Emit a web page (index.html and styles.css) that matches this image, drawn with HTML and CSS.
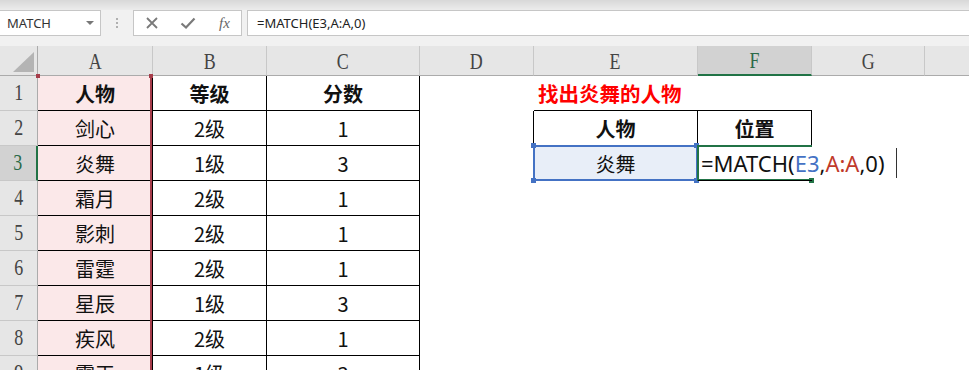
FILE: index.html
```html
<!DOCTYPE html>
<html lang="zh">
<head>
<meta charset="utf-8">
<link rel="stylesheet" href="styles.css">
</head>
<body>
<div class="app">
  <div class="topstrip"></div>
  <div class="fbar">
    <div class="namebox"><span>MATCH</span><span class="caret"></span></div>
    <div class="grip"><i></i><i></i><i></i></div>
    <div class="btns">
      <svg class="ic" width="14" height="14" viewBox="0 0 14 14"><path d="M2 2L12 12M12 2L2 12" stroke="#7a7a7a" stroke-width="1.8" fill="none"/></svg>
      <svg class="ic" width="16" height="14" viewBox="0 0 16 14"><path d="M1.5 7.5L6 11.5L14.5 2.5" stroke="#7a7a7a" stroke-width="2.2" fill="none"/></svg>
      <span class="fx">fx</span>
    </div>
    <div class="formula">=MATCH(E3,A:A,0)</div>
  </div>

  <div class="sheet">
    <div class="ch corner"><div class="tri"></div></div>
    <div class="ch"><span class="lb">A</span></div><div class="ch"><span class="lb">B</span></div><div class="ch"><span class="lb">C</span></div><div class="ch"><span class="lb">D</span></div><div class="ch"><span class="lb">E</span></div><div class="ch sel"><span class="lb">F</span></div><div class="ch"><span class="lb">G</span></div><div class="ch last"></div>

    <div class="rh"><span class="lb">1</span></div>
    <div class="c t pink b">人物</div><div class="c t b">等级</div><div class="c t b">分数</div>
    <div class="c"></div><div class="c bb title">找出炎舞的人物</div><div class="c bb"></div><div class="c"></div><div class="c"></div>

    <div class="rh"><span class="lb">2</span></div>
    <div class="c t pink">剑心</div><div class="c t">2级</div><div class="c t">1</div>
    <div class="c br"></div><div class="c t b">人物</div><div class="c t b">位置</div><div class="c"></div><div class="c"></div>

    <div class="rh sel"><span class="lb">3</span></div>
    <div class="c t pink">炎舞</div><div class="c t">1级</div><div class="c t">3</div>
    <div class="c br"></div><div class="c t blue">炎舞</div>
    <div class="c t formulacell"><span>=MATCH(</span><span class="rb">E3</span><span>,</span><span class="rr">A:A</span><span>,0)</span></div>
    <div class="c"></div><div class="c"></div>

    <div class="rh"><span class="lb">4</span></div>
    <div class="c t pink">霜月</div><div class="c t">2级</div><div class="c t">1</div>
    <div class="c"></div><div class="c"></div><div class="c"></div><div class="c"></div><div class="c"></div>

    <div class="rh"><span class="lb">5</span></div>
    <div class="c t pink">影刺</div><div class="c t">2级</div><div class="c t">1</div>
    <div class="c"></div><div class="c"></div><div class="c"></div><div class="c"></div><div class="c"></div>

    <div class="rh"><span class="lb">6</span></div>
    <div class="c t pink">雷霆</div><div class="c t">2级</div><div class="c t">1</div>
    <div class="c"></div><div class="c"></div><div class="c"></div><div class="c"></div><div class="c"></div>

    <div class="rh"><span class="lb">7</span></div>
    <div class="c t pink">星辰</div><div class="c t">1级</div><div class="c t">3</div>
    <div class="c"></div><div class="c"></div><div class="c"></div><div class="c"></div><div class="c"></div>

    <div class="rh"><span class="lb">8</span></div>
    <div class="c t pink">疾风</div><div class="c t">2级</div><div class="c t">1</div>
    <div class="c"></div><div class="c"></div><div class="c"></div><div class="c"></div><div class="c"></div>

    <div class="rh"><span class="lb">9</span></div>
    <div class="c t pink">霸王</div><div class="c t">1级</div><div class="c t">3</div>
    <div class="c"></div><div class="c"></div><div class="c"></div><div class="c"></div><div class="c"></div>

    <div class="refA"></div>
    <div class="hd red h1"></div>
    <div class="hd red h2"></div>
    <div class="refE"></div>
    <div class="hd blu e1"></div>
    <div class="hd blu e2"></div>
    <div class="hd blu e3"></div>
    <div class="hd blu e4"></div>
    <div class="active"></div>
    <div class="fillh"></div>
    <div class="cursor"></div>
  </div>
</div>
</body>
</html>
```

FILE: styles.css
```css
html, body { margin: 0; padding: 0; background: #fff; }
body { width: 969px; height: 370px; overflow: hidden; font-family: "Noto Sans CJK SC", "Noto Sans", sans-serif; }
.app { width: 969px; height: 370px; overflow: hidden; }

.topstrip { height: 10px; background: linear-gradient(#d8d8d8, #ececec); }
.fbar { height: 36px; background: #f1f1f1; display: flex; align-items: flex-start; box-sizing: border-box; }
.namebox { width: 101px; height: 26px; box-sizing: border-box; background: #fff; border: 1px solid #c6c6c6; border-left: none; display: flex; align-items: center; justify-content: space-between; padding: 0 6px 0 7px; font-family: "Noto Sans", sans-serif; font-size: 13px; color: #333; }
.caret { width: 0; height: 0; border-left: 4px solid transparent; border-right: 4px solid transparent; border-top: 4px solid #777; }
.grip { width: 32px; height: 26px; display: flex; flex-direction: column; align-items: center; justify-content: center; gap: 2px; }
.grip i { display: block; width: 2px; height: 2px; background: #b0b0b0; }
.btns { width: 109px; height: 26px; box-sizing: border-box; background: #fff; border: 1px solid #c6c6c6; display: flex; align-items: center; gap: 21px; padding: 0 0 0 11px; }
.fx { font-family: "Liberation Serif", serif; font-style: italic; font-size: 15px; color: #666; margin-left: 2px; }
.formula { flex: 1; margin-left: 5px; height: 26px; box-sizing: border-box; background: #fff; border: 1px solid #c6c6c6; border-right: none; font-family: "Noto Sans", sans-serif; font-size: 13px; color: #222; padding-left: 9px; line-height: 24px; }

.sheet { position: relative; display: grid; grid-template-columns: 38px 115px 114px 153px 114px 164px 114px 113px 1fr; grid-template-rows: 30px repeat(9, 35px); }
.lb { display: inline-block; transform: scaleX(0.78); }
.ch { background: #e6e6e6; border-bottom: 1px solid #ababab; border-right: 1px solid #c8c8c8; box-sizing: border-box; display: flex; align-items: center; justify-content: center; font-family: "Liberation Serif", serif; font-size: 23px; color: #444; padding-top: 2px; }
.ch.corner { border-right: 1px solid #ababab; position: relative; }
.ch.last { border-right: none; }
.ch.sel { background: #d2d2d2; color: #2b6a48; border-bottom: 2px solid #217346; }
.tri { position: absolute; left: 13px; top: 6px; width: 21px; height: 20px; background: #b4b4b4; clip-path: polygon(100% 0, 100% 100%, 0 100%); }

.rh { background: #e6e6e6; border-right: 1px solid #ababab; border-bottom: 1px solid #c8c8c8; box-sizing: border-box; display: flex; align-items: center; justify-content: center; font-family: "Liberation Serif", serif; font-size: 23px; color: #444; }
.rh.sel { background: #d2d2d2; color: #2b6a48; border-right: 2px solid #217346; }

.c { box-sizing: border-box; display: flex; align-items: center; justify-content: center; font-size: 20px; color: #111; white-space: nowrap; min-width: 0; }
.c.t { border-right: 1px solid #000; border-bottom: 1px solid #000; }
.c.bb { border-bottom: 1px solid #000; }
.c.br { border-right: 1px solid #000; }
.c.b { font-weight: bold; }
.c.pink { background: #fbe8e9; }
.c.blue { background: #e8eef8; }
.c.title { justify-content: flex-start; padding-left: 4px; color: #ff0000; font-weight: bold; overflow: visible; font-size: 20.5px; }
.c.formulacell { justify-content: flex-start; padding-left: 3px; overflow: visible; font-family: "Noto Sans", sans-serif; font-size: 22px; border-right: none; z-index: 2; }
.rb { color: #4472c4; }
.rr { color: #c0392b; }

.refA { position: absolute; left: 150px; top: 29px; width: 2px; height: 320px; background: #a63c4a; }
.hd { position: absolute; width: 4px; height: 4px; }
.hd.red { background: #a63c4a; }
.h1 { left: 36px; top: 28px; }
.h2 { left: 149px; top: 28px; }
.refE { position: absolute; left: 533px; top: 99px; width: 165px; height: 36px; box-sizing: border-box; border: 2px solid #4472c4; }
.hd.blu { background: #4472c4; width: 5px; height: 5px; }
.e1 { left: 531px; top: 97px; }
.e2 { left: 694px; top: 97px; }
.e3 { left: 531px; top: 132px; }
.e4 { left: 694px; top: 132px; }
.active { position: absolute; left: 697px; top: 99px; width: 115px; height: 36px; box-sizing: border-box; border: 2px solid #217346; border-right: none; z-index: 1; }
.fillh { position: absolute; left: 809px; top: 132px; width: 5px; height: 5px; background: #217346; z-index: 1; }
.cursor { position: absolute; left: 896px; top: 102px; width: 1px; height: 30px; background: #333; }
```
